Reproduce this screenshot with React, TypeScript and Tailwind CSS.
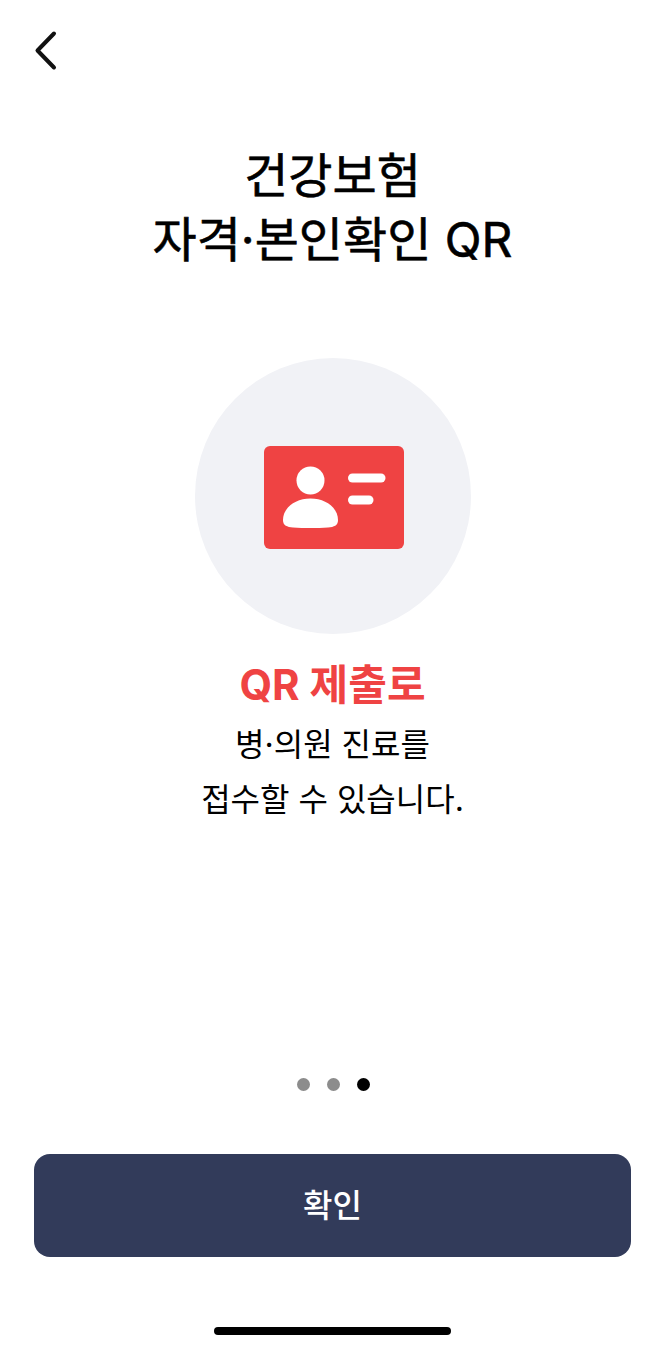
import React from 'react';

const fontStack = "font-['Inter','Noto_Sans_CJK_KR',sans-serif]";

const IdCardIcon: React.FC = () => (
  <svg className="mt-[2px] ml-[2px]" width="140" height="103" viewBox="0 0 140 103" fill="none">
    <rect width="140" height="103" rx="6" fill="#EF4343" />
    <circle cx="46.5" cy="34.5" r="14" fill="#fff" />
    <path
      d="M46.5 52.500C31 52.500 19 62 19 74C19 79.500 23 81 29 81.500C40 82.300 53 82.300 64 81.500C70 81 74 79.500 74 74C74 62 62 52.500 46.500 52.500Z"
      fill="#fff"
    />
    <rect x="84" y="27.500" width="37.500" height="9" rx="4.500" fill="#fff" />
    <rect x="84" y="49.500" width="25.500" height="9" rx="4.500" fill="#fff" />
  </svg>
);

export default function App() {
  return (
    <div className={`w-[665px] h-[1349px] bg-white flex flex-col items-center overflow-hidden ${fontStack}`}>
      <div className="w-full h-[144px] pt-[30px] pl-[32px]">
        <svg width="26" height="42" viewBox="0 0 26 42" fill="none">
          <path
            d="M22 3.500L5.500 20.500L22 37.500"
            stroke="#111"
            strokeWidth="4"
            strokeLinecap="round"
            strokeLinejoin="round"
          />
        </svg>
      </div>

      <h1 className="h-[214px] text-[48px] leading-[64px] font-normal text-black text-center [-webkit-text-stroke:0.6px_#000]">
        건강보험
        <br />
        자격·본인확인 QR
      </h1>

      <div className="w-[276px] h-[276px] rounded-full bg-[#f1f2f6] flex items-center justify-center">
        <IdCardIcon />
      </div>

      <p className="mt-[22px] text-[42px] leading-[58px] font-bold text-[#ef4343] text-center">QR 제출로</p>
      <p className="mt-[3px] text-[32px] leading-[55px] text-black text-center">
        병·의원 진료를
        <br />
        접수할 수 있습니다.
      </p>

      <div className="mt-[251px] ml-[1px] flex gap-[17px]">
        <span className="w-[13px] h-[13px] rounded-full bg-[#8c8c8c]" />
        <span className="w-[13px] h-[13px] rounded-full bg-[#8c8c8c]" />
        <span className="w-[13px] h-[13px] rounded-full bg-black" />
      </div>

      <button className="mt-[63px] w-[597px] h-[103px] shrink-0 rounded-[16px] bg-[#323b5a] text-white text-[32px] font-medium">
        확인
      </button>

      <div className="mt-[70px] w-[237px] h-[8px] shrink-0 rounded-full bg-black" />
    </div>
  );
}
